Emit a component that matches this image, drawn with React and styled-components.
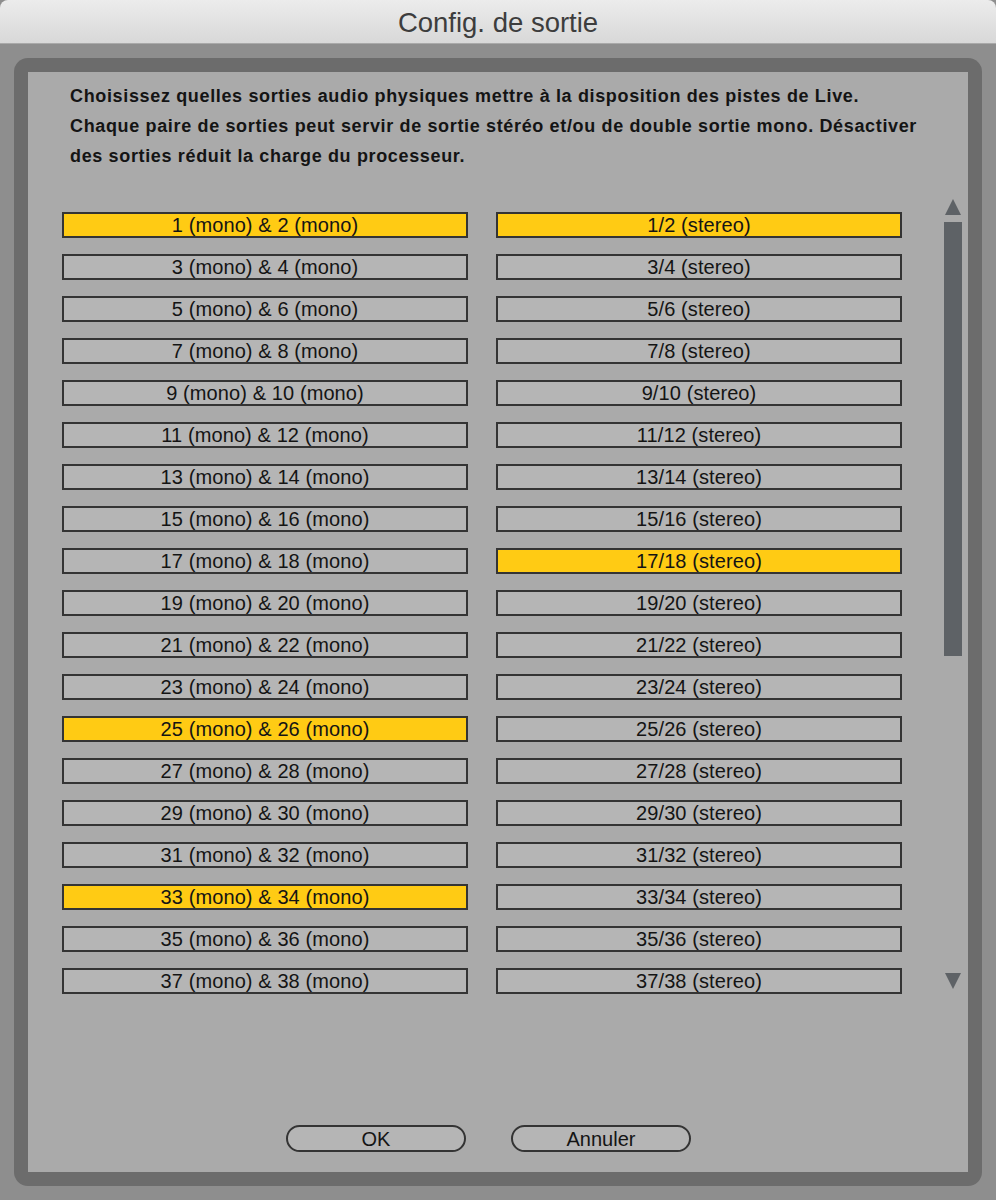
import React from "react";
import styled, { createGlobalStyle } from "styled-components";

const GlobalStyle = createGlobalStyle`
  html, body {
    margin: 0;
    padding: 0;
    background: #8e8e8e;
  }
  body {
    font-family: "Liberation Sans", Arial, sans-serif;
  }
`;

const Window = styled.div`
  width: 996px;
  height: 1200px;
  display: flex;
  flex-direction: column;
  background: #8e8e8e;
  overflow: hidden;
`;

const TitleBar = styled.div`
  height: 44px;
  box-sizing: border-box;
  padding-top: 3px;
  flex: none;
  display: flex;
  align-items: center;
  justify-content: center;
  background: linear-gradient(#ececec, #d8d8d8);
  border-bottom: 1px solid #a9a9a9;
  border-radius: 8px 8px 0 0;
  color: #3d3d3d;
  font-size: 27.5px;
`;

const Body = styled.div`
  flex: 1;
  padding: 14px;
  display: flex;
`;

const Frame = styled.div`
  flex: 1;
  background: #6c6c6c;
  border-radius: 14px;
  padding: 14px;
  display: flex;
`;

const Panel = styled.div`
  flex: 1;
  background: #aaaaaa;
  display: flex;
  flex-direction: column;
`;

const Intro = styled.p`
  margin: 9px 0 0 42px;
  font-size: 18px;
  font-weight: bold;
  letter-spacing: 0.65px;
  line-height: 30px;
  color: #141414;
`;

const Content = styled.div`
  display: flex;
  margin-top: 28px;
  padding-left: 34px;
`;

const Grid = styled.div`
  display: grid;
  grid-template-columns: 406px 406px;
  column-gap: 28px;
  row-gap: 16px;
  padding-top: 13px;
  align-content: start;
`;

const Toggle = styled.button`
  height: 26px;
  box-sizing: border-box;
  border: 2px solid #343434;
  background: ${(p) => (p.$on ? "#ffcb14" : "#b5b5b5")};
  color: #141414;
  font-family: "Liberation Sans", Arial, sans-serif;
  font-size: 20px;
  letter-spacing: 0.1px;
  line-height: 22px;
  padding: 0;
  text-align: center;
  cursor: pointer;
`;

const Scrollbar = styled.div`
  width: 18px;
  height: 790px;
  margin-left: 42px;
  display: flex;
  flex-direction: column;
  align-items: center;
`;

const Arrow = styled.div`
  width: 0;
  height: 0;
  border-left: 8px solid transparent;
  border-right: 8px solid transparent;
  ${(p) =>
    p.$down
      ? "border-top: 16px solid #5e6266; margin-top: auto;"
      : "border-bottom: 16px solid #5e6266;"}
`;

const Thumb = styled.div`
  width: 18px;
  height: 434px;
  margin-top: 7px;
  background: #5e6266;
`;

const Footer = styled.div`
  margin-top: auto;
  margin-bottom: 20px;
  padding-left: 258px;
  display: flex;
  gap: 45px;
`;

const PillButton = styled.button`
  width: 180px;
  height: 27px;
  box-sizing: border-box;
  border: 2px solid #343434;
  border-radius: 14px;
  background: #b5b5b5;
  color: #141414;
  font-family: "Liberation Sans", Arial, sans-serif;
  font-size: 20px;
  line-height: 22px;
  padding: 0;
  cursor: pointer;
`;

const monoOn = new Set([1, 25, 33]);
const stereoOn = new Set([1, 17]);

const rows = Array.from({ length: 19 }, (_, i) => 2 * i + 1);

export default function App() {
  return (
    <>
      <GlobalStyle />
      <Window>
        <TitleBar>Config. de sortie</TitleBar>
        <Body>
          <Frame>
            <Panel>
              <Intro>
                Choisissez quelles sorties audio physiques mettre à la disposition des pistes de Live.
                <br />
                Chaque paire de sorties peut servir de sortie stéréo et/ou de double sortie mono. Désactiver
                <br />
                des sorties réduit la charge du processeur.
              </Intro>
              <Content>
                <Grid>
                  {rows.map((n) => (
                    <React.Fragment key={n}>
                      <Toggle $on={monoOn.has(n)}>
                        {n} (mono) &amp; {n + 1} (mono)
                      </Toggle>
                      <Toggle $on={stereoOn.has(n)}>
                        {n}/{n + 1} (stereo)
                      </Toggle>
                    </React.Fragment>
                  ))}
                </Grid>
                <Scrollbar>
                  <Arrow />
                  <Thumb />
                  <Arrow $down />
                </Scrollbar>
              </Content>
              <Footer>
                <PillButton>OK</PillButton>
                <PillButton>Annuler</PillButton>
              </Footer>
            </Panel>
          </Frame>
        </Body>
      </Window>
    </>
  );
}
